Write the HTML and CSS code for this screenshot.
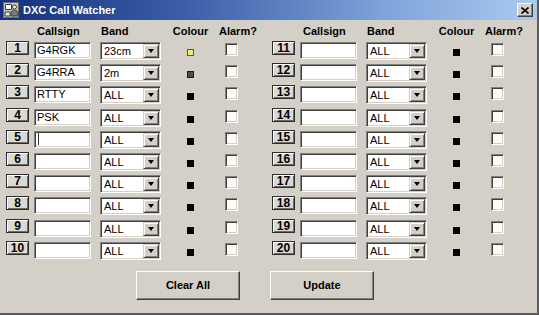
FILE: index.html
```html
<!DOCTYPE html>
<html lang="en">

<head>
  <meta charset="UTF-8">
  <title>DXC Call Watcher</title>
  <link rel="stylesheet" href="styles.css">
</head>

<body>
  <div class="window">
    <div class="titlebar">
      <svg class="app-icon" width="16" height="16" viewBox="0 0 16 16">
        <rect x="0.5" y="0.5" width="15" height="15" fill="#c9c7bd" stroke="#6d6b63" />
        <path d="M2.5 2.5h6v5h-6z" fill="#fff" stroke="#3c3c3c" />
        <circle cx="11.5" cy="5" r="2" fill="#f2f0e6" stroke="#3c3c3c" />
        <path d="M8 14v-3c0-2 2-3 3.5-3s3.5 1 3.5 3v3z" fill="#7c7a72" stroke="#3c3c3c" />
        <path d="M2 10h5v4H2z" fill="#ecebe3" stroke="#3c3c3c" />
      </svg>
      <span class="title">DXC Call Watcher</span>
      <span class="close">
        <svg width="8" height="7" viewBox="0 0 8 7">
          <path d="M0.5 0.5l7 6M7.5 0.5l-7 6" stroke="#000" stroke-width="1.6" />
        </svg>
      </span>
    </div>

    <div class="panel">
      <!-- 左侧 1-10 -->
      <div class="group">
        <div></div>
        <div class="head head-call">Callsign</div>
        <div class="head head-band">Band</div>
        <div class="head head-colour">Colour</div>
        <div class="head head-alarm">Alarm?</div>

        <div class="num">1</div>
        <div class="field">G4RGK</div>
        <div class="select"><span class="value">23cm</span><span class="drop"></span></div>
        <div class="swatch yellow"></div>
        <div class="check"></div>

        <div class="num">2</div>
        <div class="field">G4RRA</div>
        <div class="select"><span class="value">2m</span><span class="drop"></span></div>
        <div class="swatch grey"></div>
        <div class="check"></div>

        <div class="num">3</div>
        <div class="field">RTTY</div>
        <div class="select"><span class="value">ALL</span><span class="drop"></span></div>
        <div class="swatch"></div>
        <div class="check"></div>

        <div class="num">4</div>
        <div class="field">PSK</div>
        <div class="select"><span class="value">ALL</span><span class="drop"></span></div>
        <div class="swatch"></div>
        <div class="check"></div>

        <div class="num">5</div>
        <div class="field"><span class="caret"></span></div>
        <div class="select"><span class="value">ALL</span><span class="drop"></span></div>
        <div class="swatch"></div>
        <div class="check"></div>

        <div class="num">6</div>
        <div class="field"></div>
        <div class="select"><span class="value">ALL</span><span class="drop"></span></div>
        <div class="swatch"></div>
        <div class="check"></div>

        <div class="num">7</div>
        <div class="field"></div>
        <div class="select"><span class="value">ALL</span><span class="drop"></span></div>
        <div class="swatch"></div>
        <div class="check"></div>

        <div class="num">8</div>
        <div class="field"></div>
        <div class="select"><span class="value">ALL</span><span class="drop"></span></div>
        <div class="swatch"></div>
        <div class="check"></div>

        <div class="num">9</div>
        <div class="field"></div>
        <div class="select"><span class="value">ALL</span><span class="drop"></span></div>
        <div class="swatch"></div>
        <div class="check"></div>

        <div class="num">10</div>
        <div class="field"></div>
        <div class="select"><span class="value">ALL</span><span class="drop"></span></div>
        <div class="swatch"></div>
        <div class="check"></div>
      </div>

      <!-- 右侧 11-20 -->
      <div class="group">
        <div></div>
        <div class="head head-call">Callsign</div>
        <div class="head head-band">Band</div>
        <div class="head head-colour">Colour</div>
        <div class="head head-alarm">Alarm?</div>

        <div class="num">11</div>
        <div class="field"></div>
        <div class="select"><span class="value">ALL</span><span class="drop"></span></div>
        <div class="swatch"></div>
        <div class="check"></div>

        <div class="num">12</div>
        <div class="field"></div>
        <div class="select"><span class="value">ALL</span><span class="drop"></span></div>
        <div class="swatch"></div>
        <div class="check"></div>

        <div class="num">13</div>
        <div class="field"></div>
        <div class="select"><span class="value">ALL</span><span class="drop"></span></div>
        <div class="swatch"></div>
        <div class="check"></div>

        <div class="num">14</div>
        <div class="field"></div>
        <div class="select"><span class="value">ALL</span><span class="drop"></span></div>
        <div class="swatch"></div>
        <div class="check"></div>

        <div class="num">15</div>
        <div class="field"></div>
        <div class="select"><span class="value">ALL</span><span class="drop"></span></div>
        <div class="swatch"></div>
        <div class="check"></div>

        <div class="num">16</div>
        <div class="field"></div>
        <div class="select"><span class="value">ALL</span><span class="drop"></span></div>
        <div class="swatch"></div>
        <div class="check"></div>

        <div class="num">17</div>
        <div class="field"></div>
        <div class="select"><span class="value">ALL</span><span class="drop"></span></div>
        <div class="swatch"></div>
        <div class="check"></div>

        <div class="num">18</div>
        <div class="field"></div>
        <div class="select"><span class="value">ALL</span><span class="drop"></span></div>
        <div class="swatch"></div>
        <div class="check"></div>

        <div class="num">19</div>
        <div class="field"></div>
        <div class="select"><span class="value">ALL</span><span class="drop"></span></div>
        <div class="swatch"></div>
        <div class="check"></div>

        <div class="num">20</div>
        <div class="field"></div>
        <div class="select"><span class="value">ALL</span><span class="drop"></span></div>
        <div class="swatch"></div>
        <div class="check"></div>
      </div>
    </div>

    <div class="actions">
      <div class="btn">Clear All</div>
      <div class="btn">Update</div>
    </div>
  </div>
</body>

</html>
```

FILE: styles.css
```css
html,
body {
  margin: 0;
  padding: 0;
}

body {
  background-color: #d4d0c8;
  font-family: "Liberation Sans", Arial, sans-serif;
  font-size: 11px;
  color: #000;
}

.window {
  width: 539px;
  height: 315px;
  box-sizing: border-box;
  border-right: 2px solid #5c5c5c;
  border-bottom: 2px solid #5c5c5c;
  background-color: #d4d0c8;
}

/* 标题栏 */
.titlebar {
  height: 20px;
  display: flex;
  align-items: center;
  padding: 0 4px 0 3px;
  background: linear-gradient(90deg, #14307c 0%, #3c5fa8 35%, #7fa4da 72%, #aacaf0 100%);
}

.app-icon {
  flex: none;
}

.title {
  margin-left: 4px;
  color: #fff;
  font-weight: bold;
  font-size: 11px;
}

.close {
  margin-left: auto;
  width: 16px;
  height: 14px;
  box-sizing: border-box;
  display: flex;
  align-items: center;
  justify-content: center;
  background-color: #d4d0c8;
  border: 1px solid;
  border-color: #fff #404040 #404040 #fff;
  box-shadow: inset -1px -1px #808080;
}

/* 主体 */
.panel {
  display: flex;
  padding-left: 6px;
}

.group {
  width: 266px;
  flex: none;
  display: grid;
  grid-template-columns: 28px 66px 62px 57px 53px;
  grid-template-rows: 22px repeat(10, 22.2px);
  align-items: start;
}

.head {
  padding-top: 5px;
  line-height: 13px;
  font-weight: bold;
  white-space: nowrap;
}

.head-call {
  padding-left: 3px;
}

.head-band {
  padding-left: 1px;
}

.head-colour {
  text-align: center;
}

.num {
  width: 23px;
  height: 14px;
  margin-top: -1px;
  box-sizing: border-box;
  border: 1px solid #2e2e2e;
  box-shadow: inset 1px 1px #fff, inset -1px -1px #6a6862;
  background-color: #dcd9d2;
  font-weight: bold;
  font-size: 12px;
  line-height: 12px;
  text-align: center;
}

.field {
  width: 57px;
  height: 17px;
  box-sizing: border-box;
  padding: 1px 0 0 2px;
  border: 1px solid;
  border-color: #808080 #fff #fff #808080;
  box-shadow: inset 1px 1px #404040, inset -1px -1px #d4d0c8;
  background-color: #fff;
  line-height: 13px;
}

.caret {
  display: inline-block;
  width: 1px;
  height: 12px;
  margin-left: 1px;
  background-color: #333;
  vertical-align: top;
}

.select {
  width: 61px;
  height: 18px;
  box-sizing: border-box;
  display: flex;
  border: 1px solid;
  border-color: #808080 #fff #fff #808080;
  box-shadow: inset 1px 1px #404040, inset -1px -1px #d4d0c8;
  background-color: #fff;
  padding: 1px;
}

.select .value {
  flex: 1;
  padding: 1px 0 0 2px;
  line-height: 13px;
}

.select .drop {
  width: 16px;
  flex: none;
  box-sizing: border-box;
  display: flex;
  align-items: center;
  justify-content: center;
  background-color: #d4d0c8;
  border: 1px solid;
  border-color: #d4d0c8 #404040 #404040 #d4d0c8;
  box-shadow: inset 1px 1px #fff, inset -1px -1px #808080;
}

.select .drop::after {
  content: "";
  border-left: 3.5px solid transparent;
  border-right: 3.5px solid transparent;
  border-top: 4px solid #000;
}

.swatch {
  justify-self: center;
  width: 7px;
  height: 7px;
  margin-top: 7px;
  box-sizing: border-box;
  background-color: #000;
}

.swatch.yellow {
  background-color: #ecec78;
  border: 1px solid #5a5a38;
}

.swatch.grey {
  background-color: #4e4e4e;
  border: 1px solid #1c1c1c;
}

.check {
  width: 13px;
  height: 13px;
  margin: 1px 0 0 6px;
  box-sizing: border-box;
  border: 1px solid;
  border-color: #808080 #fff #fff #808080;
  box-shadow: inset 1px 1px #404040, inset -1px -1px #d4d0c8;
  background-color: #fbfbf8;
}

/* 底部按钮 */
.actions {
  display: flex;
  gap: 30px;
  padding-left: 136px;
  margin-top: 7px;
}

.btn {
  width: 104px;
  height: 29px;
  box-sizing: border-box;
  display: flex;
  align-items: center;
  justify-content: center;
  border: 1px solid;
  border-color: #fff #404040 #404040 #fff;
  box-shadow: inset -1px -1px #808080;
  font-weight: bold;
  font-size: 11px;
}
```
